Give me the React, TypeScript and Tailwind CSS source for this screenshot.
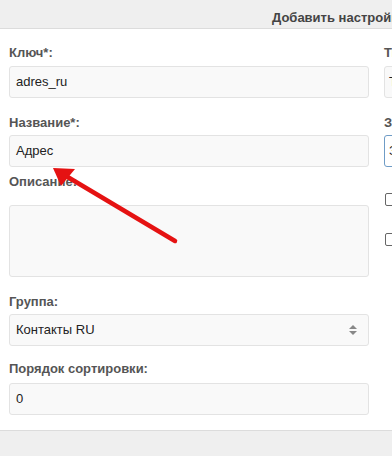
import React from "react";

const inputCls =
  "h-[32px] w-full rounded-[3px] border border-[#e3e3e3] bg-[#f9f9f9] px-[6px] text-[13px] text-[#222] flex items-center";
const labelCls = "h-[20px] leading-[20px] text-[13px] font-bold text-[#555]";

const App = () => {
  return (
    <div className="relative h-[456px] w-[392px] overflow-hidden bg-white font-['Liberation_Sans',Arial,sans-serif]">
      <div className="h-[29px] border-b border-[#dcdcdc] bg-[#efefef] pl-[272px] pt-[5px]">
        <span className="whitespace-nowrap text-[13px] font-bold leading-[16px] text-[#444]">
          Добавить настройку
        </span>
      </div>

      <div className="flex pl-[9px]">
        <div className="w-[360px] shrink-0">
          <div className={`${labelCls} mt-[14px]`}>Ключ*:</div>
          <div className={`${inputCls} mt-[3px]`}>adres_ru</div>

          <div className={`${labelCls} mt-[15px]`}>Название*:</div>
          <div className={`${inputCls} mt-[2px]`}>Адрес</div>

          <div className={`${labelCls} mt-[5px]`}>Описание:</div>
          <div className="mt-[13px] h-[72px] w-full rounded-[3px] border border-[#e3e3e3] bg-[#f9f9f9]" />

          <div className={`${labelCls} mt-[15px]`}>Группа:</div>
          <div className={`${inputCls} mt-[2px] justify-between pr-[11px]`}>
            <span>Контакты RU</span>
            <span className="flex flex-col items-center gap-[2px]">
              <span className="h-0 w-0 border-x-[4px] border-b-[4px] border-x-transparent border-b-[#888]" />
              <span className="h-0 w-0 border-x-[4px] border-t-[4px] border-x-transparent border-t-[#888]" />
            </span>
          </div>

          <div className={`${labelCls} mt-[13px]`}>Порядок сортировки:</div>
          <div className={`${inputCls} mt-[4px]`}>0</div>
        </div>

        <div className="ml-[15px] w-[200px] shrink-0">
          <div className={`${labelCls} mt-[14px]`}>Тип:</div>
          <div className={`${inputCls} mt-[3px] pl-[4px]`}>Текст</div>

          <div className={`${labelCls} mt-[15px]`}>Значение:</div>
          <div className="mt-[2px] flex h-[32px] w-full items-center rounded-[3px] border border-[#6f9cc6] bg-white pl-[4px] text-[13px] text-[#222]">
            Значение
          </div>

          <div className="ml-[1px] mt-[26px] h-[13px] w-[13px] rounded-[2px] border border-[#666] bg-white" />
          <div className="ml-[1px] mt-[27px] h-[13px] w-[13px] rounded-[2px] border border-[#666] bg-white" />
        </div>
      </div>

      <div className="mt-[15px] h-[40px] border-t border-[#dcdcdc] bg-[#efefef]" />

      <svg
        className="pointer-events-none absolute left-0 top-0"
        width="392"
        height="456"
        viewBox="0 0 392 456"
      >
        <line
          x1="175"
          y1="241"
          x2="66"
          y2="176"
          stroke="#e51212"
          strokeWidth="4.5"
          strokeLinecap="round"
        />
        <polygon points="53,168 75,169 61,186" fill="#e51212" />
      </svg>
    </div>
  );
};

export default App;
